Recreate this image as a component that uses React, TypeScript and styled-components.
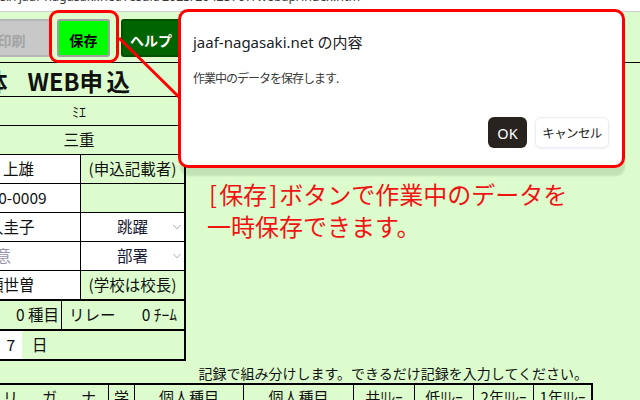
import React from "react";
import styled, { createGlobalStyle } from "styled-components";

const JP = `"Noto Sans CJK JP", "Noto Sans", sans-serif`;
const UI = `"Noto Sans", "Noto Sans CJK JP", sans-serif`;
const GREEN = "#dcfccd";
const RED = "#ff0000";

const Global = createGlobalStyle`
  html, body { margin: 0; padding: 0; background: ${GREEN}; }
  * { box-sizing: border-box; }
`;

const Page = styled.div`
  position: relative;
  width: 640px;
  height: 400px;
  overflow: hidden;
  background: ${GREEN};
  font-family: ${JP};
  color: #111;
`;

const UrlBar = styled.div`
  height: 12px;
  background: #fff;
  border-bottom: 1px solid #cfcfcf;
  overflow: hidden;
`;

const UrlText = styled.div`
  margin-top: -10px;
  font-family: ${UI};
  font-size: 12.5px;
  line-height: 13px;
  color: #3a3a3a;
  white-space: nowrap;
`;

const Toolbar = styled.div`
  height: 51px;
  border-bottom: 1px solid #000;
  display: flex;
  align-items: flex-start;
  padding-top: 7px;
  margin-left: -28px;
`;

const ToolButton = styled.div<{ $w: number; $bg: string; $fg: string; $bd: string; $gap: number }>`
  width: ${(p) => p.$w}px;
  height: 38px;
  flex: none;
  margin-right: ${(p) => p.$gap}px;
  background: ${(p) => p.$bg};
  color: ${(p) => p.$fg};
  border: 2px solid ${(p) => p.$bd};
  border-radius: 3px;
  display: flex;
  align-items: center;
  justify-content: center;
  font-weight: 700;
  font-size: 14px;
  line-height: 1;
  padding-top: 3px;
  white-space: nowrap;
`;

const Main = styled.div`
  display: flex;
  flex-direction: column;
`;

const Form = styled.div`
  margin-left: -26px;
  width: 212px;
`;

const Title = styled.div`
  height: 34px;
  border-bottom: 1px solid #000;
  font-size: 23.5px;
  font-weight: 700;
  line-height: 34px;
  text-indent: -17px;
  white-space: nowrap;
  padding-top: 1px;
`;

const Wide = styled.span`
  letter-spacing: 3.5px;
`;

const Body = styled.div`
  border-right: 2px solid #000;
`;

const FullRow = styled.div<{ $size: number }>`
  height: 29px;
  border-bottom: 1px solid #000;
  display: flex;
  align-items: center;
  justify-content: center;
  font-size: ${(p) => p.$size}px;
  line-height: 1;
`;

const SplitRow = styled.div`
  height: 29px;
  border-bottom: 1px solid #000;
  display: grid;
  grid-template-columns: 107px 1fr;
`;

const NameCell = styled.div<{ $pad: number; $muted?: boolean }>`
  background: #fff;
  border-right: 1px solid #000;
  display: flex;
  align-items: center;
  padding-left: ${(p) => p.$pad}px;
  font-size: 15.5px;
  line-height: 1;
  white-space: nowrap;
  overflow: hidden;
  color: ${(p) => (p.$muted ? "#9a94aa" : "#111")};
`;

const NoteCell = styled.div<{ $white?: boolean }>`
  background: ${(p) => (p.$white ? "#fff" : GREEN)};
  display: flex;
  align-items: center;
  justify-content: center;
  font-size: 15.5px;
  line-height: 1;
  white-space: nowrap;
`;

const SelectCell = styled.div`
  background: #fff;
  display: flex;
  align-items: center;
  padding-left: 11px;
  font-size: 15.5px;
  line-height: 1;
  color: #161630;
`;

const SelectText = styled.span`
  flex: 1;
  text-align: center;
`;

const Chevron = styled.svg`
  width: 8px;
  height: 6px;
  margin-right: 3px;
  flex: none;
`;

const Totals = styled.div`
  border-top: 1px solid #000;
`;

const CountRow = styled.div`
  height: 30px;
  border-bottom: 2px solid #000;
  display: grid;
  grid-template-columns: 88px 1fr;
  font-size: 15.5px;
  line-height: 1;
`;

const CountCell = styled.div<{ $split?: boolean }>`
  display: flex;
  align-items: center;
  justify-content: ${(p) => (p.$split ? "space-between" : "flex-end")};
  padding: ${(p) => (p.$split ? "0 7px 0 7px" : "0 2px 0 0")};
  border-right: ${(p) => (p.$split ? "none" : "1.5px solid #000")};
  white-space: nowrap;
`;

const DateRow = styled.div`
  height: 30px;
  border-bottom: 2px solid #000;
  display: grid;
  grid-template-columns: 48px 1fr;
  font-size: 15.5px;
  line-height: 1;
`;

const DateInput = styled.div`
  background: #fff;
  display: flex;
  align-items: center;
  justify-content: flex-end;
  padding-right: 7px;
`;

const DateLabel = styled.div`
  display: flex;
  align-items: center;
  padding-left: 10px;
`;

const Note = styled.div`
  padding: 3px 52px 0 0;
  text-align: right;
  font-size: 14px;
  line-height: 19px;
  white-space: nowrap;
`;

const EntryHead = styled.div`
  margin-left: -50px;
  display: grid;
  grid-template-columns: 159px 26px 109px 110px 61px 59px 60px 59px;
  width: 643px;
  border-top: 2px solid #000;
`;

const HeadCell = styled.div<{ $last?: boolean; $left?: boolean }>`
  height: 28px;
  border-right: ${(p) => (p.$last ? "2px" : "1px")} solid #000;
  display: flex;
  align-items: flex-start;
  justify-content: ${(p) => (p.$left ? "flex-start" : "center")};
  gap: 24px;
  padding-left: ${(p) => (p.$left ? "14px" : "0")};
  padding-top: 4px;
  font-size: 15px;
  line-height: 1;
  white-space: nowrap;
  overflow: hidden;
`;

/* overlays */
const Highlight = styled.div`
  position: absolute;
  left: 49px;
  top: 10px;
  width: 70px;
  height: 53px;
  border: 3px solid ${RED};
  border-radius: 9px;
`;

const Connector = styled.svg`
  position: absolute;
  left: 116px;
  top: 35px;
  width: 70px;
  height: 68px;
  overflow: visible;
`;

const Dialog = styled.div`
  position: absolute;
  left: 178px;
  top: 9px;
  width: 447px;
  height: 159px;
  background: #fff;
  border: 3px solid ${RED};
  border-radius: 10px;
  box-shadow: 1px 9px 2px -1px rgba(0, 50, 0, 0.12);
  display: flex;
  flex-direction: column;
  padding: 20px 13px 17px 12px;
`;

const DialogTitle = styled.div`
  font-family: ${UI};
  font-size: 15px;
  line-height: 20px;
  color: #202124;
`;

const DialogMessage = styled.div`
  margin-top: 18px;
  font-family: ${JP};
  font-size: 12px;
  letter-spacing: -1px;
  line-height: 16px;
  color: #3a3a3a;
`;

const DialogActions = styled.div`
  margin-top: auto;
  display: flex;
  justify-content: flex-end;
  gap: 8px;
`;

const DialogButton = styled.div<{ $primary?: boolean; $w: number }>`
  width: ${(p) => p.$w}px;
  height: 31px;
  border-radius: 6px;
  display: flex;
  align-items: center;
  justify-content: center;
  font-family: ${UI};
  font-size: ${(p) => (p.$primary ? "14.5px" : "12.5px")};
  letter-spacing: ${(p) => (p.$primary ? "0" : "-0.6px")};
  background: ${(p) => (p.$primary ? "#28231f" : "#fff")};
  color: ${(p) => (p.$primary ? "#fff" : "#222")};
  border: ${(p) => (p.$primary ? "none" : "1px solid #efebf3")};
  box-shadow: ${(p) => (p.$primary ? "none" : "0 1px 2px rgba(60,40,90,0.08)")};
`;

const Callout = styled.div`
  position: absolute;
  left: 207px;
  top: 178px;
  font-family: ${JP};
  font-size: 24px;
  line-height: 32px;
  color: #f01414;
  white-space: nowrap;
`;

const Bracket = styled.span`
  display: inline-block;
  padding: 0 2px;
`;

const Down = () => (
  <Chevron viewBox="0 0 8 6">
    <polyline points="0.5,1 4,4.8 7.5,1" fill="none" stroke="#a8a8a8" strokeWidth="1" />
  </Chevron>
);

export default function App() {
  return (
    <Page>
      <Global />
      <UrlBar>
        <UrlText>s://jaaf-nagasaki.net/result/2023/20425707/webap/index.htm</UrlText>
      </UrlBar>
      <Toolbar>
        <ToolButton $w={79} $bg="#c8c8c8" $fg="#a4a4a4" $bd="#b6b6b6" $gap={6}>印刷</ToolButton>
        <ToolButton $w={53} $bg="#00ff00" $fg="#000" $bd="#a0a0a0" $gap={11}>保存</ToolButton>
        <ToolButton $w={60} $bg="#006400" $fg="#fff" $bd="#005000" $gap={0}>ヘルプ</ToolButton>
      </Toolbar>
      <Main>
        <Form>
          <Title>
            <Wide>総体</Wide>{"\u2002\u2009"}WEB<Wide>申込</Wide>
          </Title>
          <Body>
            <FullRow $size={14}>ﾐｴ</FullRow>
            <FullRow $size={15.5}>三重</FullRow>
            <SplitRow>
              <NameCell $pad={29}>上雄</NameCell>
              <NoteCell>(申込記載者)</NoteCell>
            </SplitRow>
            <SplitRow>
              <NameCell $pad={7}>850-0009</NameCell>
              <NoteCell />
            </SplitRow>
            <SplitRow>
              <NameCell $pad={14}>久圭子</NameCell>
              <SelectCell>
                <SelectText>跳躍</SelectText>
                <Down />
              </SelectCell>
            </SplitRow>
            <SplitRow>
              <NameCell $pad={6} $muted>任意</NameCell>
              <SelectCell>
                <SelectText>部署</SelectText>
                <Down />
              </SelectCell>
            </SplitRow>
            <SplitRow>
              <NameCell $pad={14}>顧世曽</NameCell>
              <NoteCell>(学校は校長)</NoteCell>
            </SplitRow>
            <Totals>
              <CountRow>
                <CountCell>0 種目</CountCell>
                <CountCell $split>
                  <span>リレー</span>
                  <span>0 ﾁｰﾑ</span>
                </CountCell>
              </CountRow>
              <DateRow>
                <DateInput>7</DateInput>
                <DateLabel>日</DateLabel>
              </DateRow>
            </Totals>
          </Body>
        </Form>
        <Note>記録で組み分けします。できるだけ記録を入力してください。</Note>
        <EntryHead>
          <HeadCell $left>
            <span>フ</span>
            <span>リ</span>
            <span>ガ</span>
            <span>ナ</span>
          </HeadCell>
          <HeadCell>学</HeadCell>
          <HeadCell>個人種目</HeadCell>
          <HeadCell>個人種目</HeadCell>
          <HeadCell>共ﾘﾚｰ</HeadCell>
          <HeadCell>低ﾘﾚｰ</HeadCell>
          <HeadCell>2年ﾘﾚｰ</HeadCell>
          <HeadCell $last>1年ﾘﾚｰ</HeadCell>
        </EntryHead>
      </Main>

      <Highlight />
      <Connector viewBox="0 0 70 68">
        <line x1="3" y1="3" x2="66" y2="65" stroke={RED} strokeWidth="3" />
      </Connector>
      <Dialog>
        <DialogTitle>jaaf-nagasaki.net の内容</DialogTitle>
        <DialogMessage>作業中のデータを保存します.</DialogMessage>
        <DialogActions>
          <DialogButton $primary $w={39}>OK</DialogButton>
          <DialogButton $w={74}>キャンセル</DialogButton>
        </DialogActions>
      </Dialog>
      <Callout>
        <Bracket>[</Bracket>保存<Bracket>]</Bracket>ボタンで作業中のデータを
        <br />
        一時保存できます。
      </Callout>
    </Page>
  );
}
